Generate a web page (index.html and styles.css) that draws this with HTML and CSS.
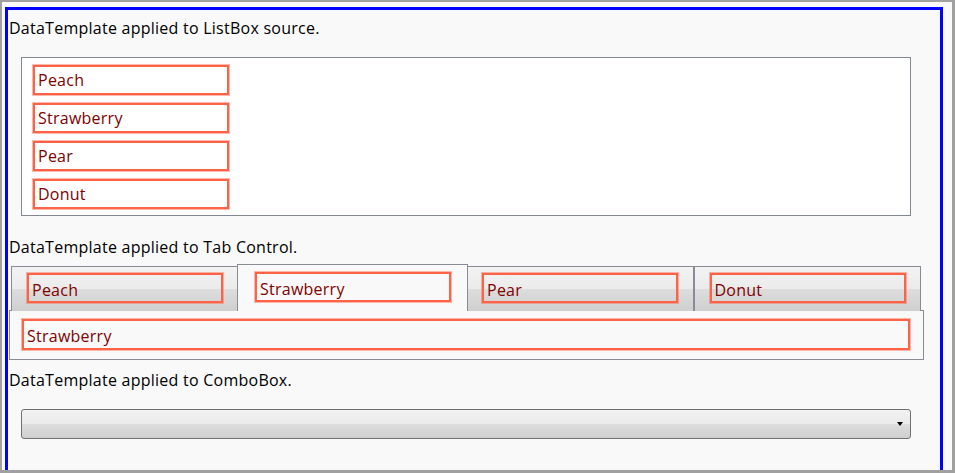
FILE: index.html
```html
<!DOCTYPE html>
<html>
<head>
<meta charset="utf-8">
<title>DataTemplate demo</title>
<link rel="stylesheet" href="styles.css">
</head>
<body>
<div class="window">
  <div class="frame">
    <div class="heading h-list">DataTemplate applied to ListBox source.</div>
    <div class="listbox">
      <div class="fruit">Peach</div>
      <div class="fruit">Strawberry</div>
      <div class="fruit">Pear</div>
      <div class="fruit">Donut</div>
    </div>
    <div class="heading h-tab">DataTemplate applied to Tab Control.</div>
    <div class="tabcontrol">
      <div class="tabstrip">
        <div class="tab"><div class="fruit">Peach</div></div>
        <div class="tab tab-selected"><div class="fruit">Strawberry</div></div>
        <div class="tab"><div class="fruit">Pear</div></div>
        <div class="tab"><div class="fruit">Donut</div></div>
      </div>
      <div class="tabpanel"><div class="fruit">Strawberry</div></div>
    </div>
    <div class="heading h-combo">DataTemplate applied to ComboBox.</div>
    <div class="combo"><span class="combo-arrow"></span></div>
  </div>
</div>
</body>
</html>
```

FILE: styles.css
```css
html, body {
  margin: 0;
  height: 100%;
}
body {
  background: #a0a0a0;
  font-family: "Open Sans", Lato, sans-serif;
  font-size: 16px;
  letter-spacing: 0.25px;
  overflow: hidden;
}
.window {
  margin: 2px 3px 0 2px;
  height: 468px;
  box-sizing: border-box;
  background: #f9f9f9;
  padding: 5px 9px 0 3px;
}
.frame {
  height: 463px;
  box-sizing: border-box;
  border: 3px solid #0000ff;
  border-bottom: 0;
}
.heading {
  box-sizing: border-box;
  height: 21px;
  line-height: 21px;
  padding: 1px 0 0 1px;
  color: #000;
  white-space: nowrap;
}
.h-list { margin-top: 7px; }
.h-tab { margin-top: 20px; }
.h-combo { margin-top: 9px; }

.listbox {
  margin: 19px 0 0 13px;
  width: 890px;
  height: 159px;
  box-sizing: border-box;
  border: 1px solid #828790;
  background: #fff;
  padding: 7px 0 0 11px;
  display: flex;
  flex-direction: column;
  gap: 8px;
}
.fruit {
  box-sizing: border-box;
  width: 196px;
  height: 30px;
  border: 2px solid #ff6347;
  box-shadow: 0 0 0 1px rgba(255, 99, 71, 0.45);
  color: #800000;
  line-height: 21px;
  padding: 3px 0 0 3px;
  white-space: nowrap;
}

.tabcontrol {
  margin: 7px 0 0 1px;
  width: 915px;
}
.tabstrip {
  display: flex;
  align-items: flex-end;
  padding-left: 2px;
  height: 47px;
  margin-bottom: -1px;
}
.tab {
  flex: none;
  box-sizing: border-box;
  width: 227.5px;
  height: 45px;
  border: 1px solid #898c95;
  border-bottom: 0;
  background: linear-gradient(#f3f3f3, #ebebeb 50%, #dddddd 50%, #cfcfcf);
  padding: 6px 0 0 15px;
}
.tab .fruit {
  padding-top: 5px;
}
.tab-selected {
  position: relative;
  z-index: 1;
  width: 231.5px;
  height: 47px;
  margin: 0 -2px;
  background: #f9f9f9;
  padding: 7px 0 0 17.5px;
}
.tabpanel {
  box-sizing: border-box;
  height: 50px;
  border: 1px solid #898c95;
  background: #f9f9f9;
  padding: 8px 13px 0 12px;
}
.tabpanel .fruit {
  width: auto;
  height: 31px;
  padding-top: 5px;
}

.combo {
  margin: 19px 0 0 13px;
  width: 890px;
  height: 30px;
  box-sizing: border-box;
  border: 1px solid #707070;
  border-radius: 3px;
  background: linear-gradient(#f2f2f2, #ebebeb 50%, #dddddd 50%, #cfcfcf);
  display: flex;
  align-items: center;
  justify-content: flex-end;
  padding-right: 7px;
}
.combo-arrow {
  width: 0;
  height: 0;
  border-left: 3.5px solid transparent;
  border-right: 3.5px solid transparent;
  border-top: 4px solid #000;
}
```
